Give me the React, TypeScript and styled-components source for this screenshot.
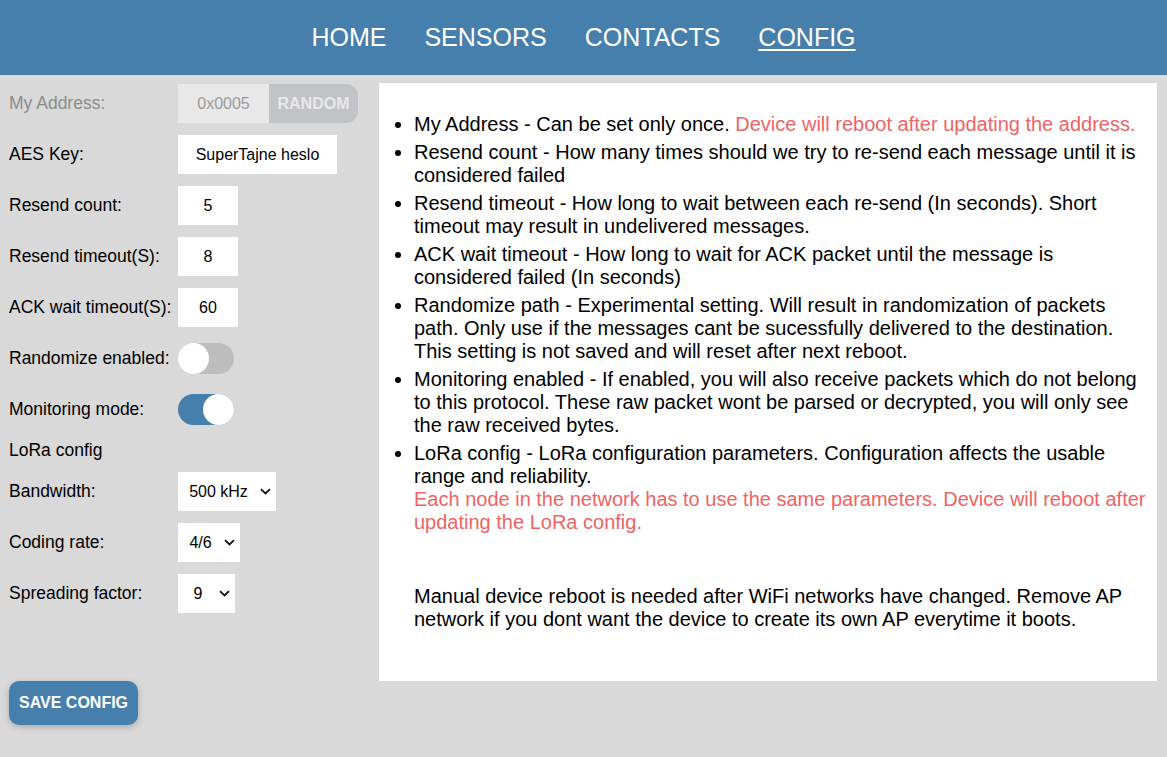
import React, { useState } from "react";
import styled, { createGlobalStyle } from "styled-components";

const GlobalStyle = createGlobalStyle`
  html, body {
    margin: 0;
    padding: 0;
    background: #d9d9d9;
    font-family: "Liberation Sans", Arial, sans-serif;
    color: #000;
  }
  #root { min-height: 100vh; }
`;

const Header = styled.nav`
  height: 75px;
  background: #467fab;
  display: flex;
  align-items: center;
  justify-content: center;
`;

const NavLink = styled.a<{ $active?: boolean }>`
  color: #fff;
  font-size: 25px;
  margin: 0 19px;
  text-decoration: ${(p) => (p.$active ? "underline" : "none")};
  text-decoration-thickness: 2px;
  text-underline-offset: 3px;
  cursor: pointer;
`;

const Main = styled.main`
  display: flex;
  align-items: flex-start;
`;

const Sidebar = styled.section`
  width: 370px;
  flex: none;
  box-sizing: border-box;
  padding: 9px 0 0 9px;
  display: flex;
  flex-direction: column;
`;

const Form = styled.div`
  display: grid;
  grid-template-columns: 169px auto;
  row-gap: 12px;
  align-items: center;
  justify-items: start;
`;

const Label = styled.span<{ $muted?: boolean }>`
  font-size: 17.5px;
  color: ${(p) => (p.$muted ? "#8c8c8c" : "#000")};
  white-space: nowrap;
`;

const Section = styled.span`
  grid-column: 1 / span 2;
  font-size: 17.5px;
  line-height: 18.5px;
`;

const Field = styled.div`
  height: 39px;
  display: flex;
  align-items: center;
`;

const TextInput = styled.input<{ $w: number; $disabled?: boolean }>`
  box-sizing: border-box;
  width: ${(p) => p.$w}px;
  height: 39px;
  border: none;
  outline: none;
  padding: 0;
  margin: 0;
  text-align: center;
  font-family: "Liberation Sans", Arial, sans-serif;
  font-size: 16px;
  color: ${(p) => (p.$disabled ? "#9a9a9a" : "#000")};
  background: ${(p) => (p.$disabled ? "#e8e8e8" : "#fff")};
`;

const RandomButton = styled.button`
  box-sizing: border-box;
  width: 89px;
  height: 39px;
  border: none;
  margin: 0;
  padding: 0;
  background: #c1c3c6;
  color: #e9e9e9;
  font-family: "Liberation Sans", Arial, sans-serif;
  font-weight: bold;
  font-size: 16px;
  border-radius: 0 12px 12px 0;
`;

const Toggle = styled.button<{ $on: boolean }>`
  position: relative;
  width: 56px;
  height: 31px;
  border: none;
  padding: 0;
  border-radius: 16px;
  background: ${(p) => (p.$on ? "#467fab" : "#bdbdbd")};
  cursor: pointer;
  &::after {
    content: "";
    position: absolute;
    top: 0;
    left: ${(p) => (p.$on ? "25px" : "0")};
    width: 31px;
    height: 31px;
    border-radius: 50%;
    background: #fff;
  }
`;

const SelectWrap = styled.div`
  position: relative;
  display: inline-flex;
`;

const Select = styled.select`
  appearance: none;
  -webkit-appearance: none;
  height: 39px;
  border: none;
  border-radius: 0;
  outline: none;
  margin: 0;
  background: #fff;
  color: #000;
  font-family: "Liberation Sans", Arial, sans-serif;
  font-size: 16px;
  padding: 0 28px 0 11px;
  text-align: center;
  text-align-last: center;
`;

const Chevron = styled.svg`
  position: absolute;
  right: 5px;
  top: 16px;
  width: 11px;
  height: 7px;
  pointer-events: none;
`;

const SaveButton = styled.button`
  align-self: flex-start;
  margin-top: 68px;
  height: 44px;
  padding: 0 10px;
  border: none;
  border-radius: 10px;
  background: #467fab;
  color: #fff;
  font-family: "Liberation Sans", Arial, sans-serif;
  font-weight: bold;
  font-size: 16px;
  box-shadow: 0 2px 6px rgba(0, 0, 0, 0.22);
  cursor: pointer;
`;

const Panel = styled.section`
  flex: 1;
  margin: 8px 10px 0 9px;
  background: #fff;
  padding: 10px 10px 50px 10px;
  font-size: 20px;
  box-sizing: border-box;
`;

const List = styled.ul`
  margin: 20px 0 0 0;
  padding-left: 25px;
`;

const Item = styled.li`
  margin-bottom: 5px;
`;

const Warn = styled.span`
  color: #f06364;
`;

const Note = styled.p`
  margin: 51px 0 0 25px;
`;

function Dropdown({ value, options }: { value: string; options: string[] }) {
  return (
    <SelectWrap>
      <Select defaultValue={value}>
        {options.map((o) => (
          <option key={o} value={o}>
            {o}
          </option>
        ))}
      </Select>
      <Chevron viewBox="0 0 11 7">
        <path d="M1 1.2 L5.5 5.5 L10 1.2" fill="none" stroke="#111" strokeWidth="1.8" />
      </Chevron>
    </SelectWrap>
  );
}

export default function App() {
  const [randomize, setRandomize] = useState(false);
  const [monitor, setMonitor] = useState(true);
  return (
    <>
      <GlobalStyle />
      <Header>
        <NavLink>HOME</NavLink>
        <NavLink>SENSORS</NavLink>
        <NavLink>CONTACTS</NavLink>
        <NavLink $active>CONFIG</NavLink>
      </Header>
      <Main>
        <Sidebar>
          <Form>
            <Label $muted>My Address:</Label>
            <Field>
              <TextInput $w={91} $disabled disabled defaultValue="0x0005" />
              <RandomButton disabled>RANDOM</RandomButton>
            </Field>
            <Label>AES Key:</Label>
            <Field>
              <TextInput $w={159} defaultValue="SuperTajne heslo" />
            </Field>
            <Label>Resend count:</Label>
            <Field>
              <TextInput $w={60} defaultValue="5" />
            </Field>
            <Label>Resend timeout(S):</Label>
            <Field>
              <TextInput $w={60} defaultValue="8" />
            </Field>
            <Label>ACK wait timeout(S):</Label>
            <Field>
              <TextInput $w={60} defaultValue="60" />
            </Field>
            <Label>Randomize enabled:</Label>
            <Field>
              <Toggle $on={randomize} onClick={() => setRandomize(!randomize)} />
            </Field>
            <Label>Monitoring mode:</Label>
            <Field>
              <Toggle $on={monitor} onClick={() => setMonitor(!monitor)} />
            </Field>
            <Section>LoRa config</Section>
            <Label>Bandwidth:</Label>
            <Field>
              <Dropdown value="500 kHz" options={["125 kHz", "250 kHz", "500 kHz"]} />
            </Field>
            <Label>Coding rate:</Label>
            <Field>
              <Dropdown value="4/6" options={["4/5", "4/6", "4/7", "4/8"]} />
            </Field>
            <Label>Spreading factor:</Label>
            <Field>
              <Dropdown value="9" options={["7", "8", "9", "10", "11", "12"]} />
            </Field>
          </Form>
          <SaveButton>SAVE CONFIG</SaveButton>
        </Sidebar>
        <Panel>
          <List>
            <Item>
              My Address - Can be set only once.{" "}
              <Warn>Device will reboot after updating the address.</Warn>
            </Item>
            <Item>
              Resend count - How many times should we try to re-send each message until it is
              considered failed
            </Item>
            <Item>
              Resend timeout - How long to wait between each re-send (In seconds). Short timeout
              may result in undelivered messages.
            </Item>
            <Item>
              ACK wait timeout - How long to wait for ACK packet until the message is considered
              failed (In seconds)
            </Item>
            <Item>
              Randomize path - Experimental setting. Will result in randomization of packets path.
              Only use if the messages cant be sucessfully delivered to the destination. This
              setting is not saved and will reset after next reboot.
            </Item>
            <Item>
              Monitoring enabled - If enabled, you will also receive packets which do not belong
              to this protocol. These raw packet wont be parsed or decrypted, you will only see
              the raw received bytes.
            </Item>
            <Item>
              LoRa config - LoRa configuration parameters. Configuration affects the usable range
              and reliability.
              <br />
              <Warn>
                Each node in the network has to use the same parameters. Device will reboot after
                updating the LoRa config.
              </Warn>
            </Item>
          </List>
          <Note>
            Manual device reboot is needed after WiFi networks have changed. Remove AP network if
            you dont want the device to create its own AP everytime it boots.
          </Note>
        </Panel>
      </Main>
    </>
  );
}
